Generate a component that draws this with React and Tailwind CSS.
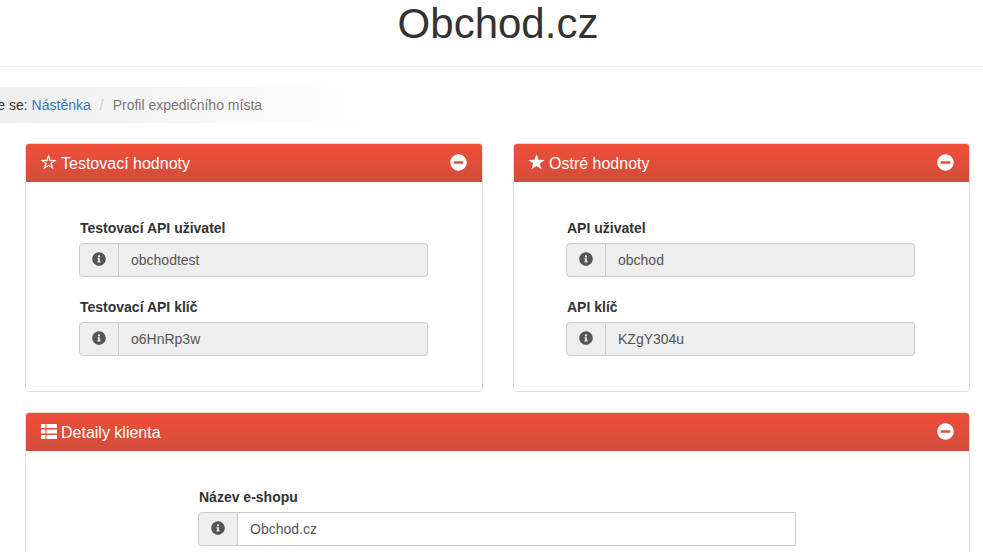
import React from "react";
import { FaInfoCircle, FaMinusCircle } from "react-icons/fa";

const STAR = "M8.5 0.3 L10.55 5.7 L16.6 5.95 L11.85 9.6 L13.5 15.3 L8.5 12 L3.5 15.3 L5.15 9.6 L0.4 5.95 L6.45 5.7 Z";
const STAR_IN = "M8.5 3.6 L9.6 7.2 L13.4 7.3 L10.3 9.4 L11.4 12.9 L8.5 10.8 L5.6 12.9 L6.7 9.4 L3.6 7.3 L7.4 7.2 Z";

function StarIcon({ outline }) {
  return (
    <svg viewBox="0 0 17 16" className="w-[17px] h-[16px] -ml-[1px] -mt-[2px]" fill="currentColor" fillRule="evenodd">
      <path d={outline ? `${STAR} ${STAR_IN}` : STAR} />
    </svg>
  );
}

function ListIcon() {
  return (
    <svg viewBox="0 0 16 15" className="w-[16px] h-[15px] -mt-[1px]" fill="currentColor">
      <rect x="0" y="0" width="4.5" height="4" rx="0.5" />
      <rect x="5.5" y="0" width="10.5" height="4" rx="0.5" />
      <rect x="0" y="5.5" width="4.5" height="4" rx="0.5" />
      <rect x="5.5" y="5.5" width="10.5" height="4" rx="0.5" />
      <rect x="0" y="11" width="4.5" height="4" rx="0.5" />
      <rect x="5.5" y="11" width="10.5" height="4" rx="0.5" />
    </svg>
  );
}

function Field({ label, value, disabled = true, className = "" }) {
  return (
    <div className={className}>
      <div className="text-[14px] leading-[20px] font-bold text-[#333] mb-[5px] pl-[1px]">{label}</div>
      <div className="flex h-[34px] text-[14px] text-[#555]">
        <div className="w-[40px] shrink-0 flex items-center justify-center bg-[#eeeeee] border border-[#cccccc] rounded-l-[4px]">
          <FaInfoCircle className="text-[#555] w-[14px] h-[14px] -mt-[2px]" />
        </div>
        <div className={`flex-1 flex items-center pl-[12px] border border-l-0 border-[#cccccc] ${disabled ? "bg-[#eeeeee] rounded-r-[4px]" : "bg-white"}`}>
          {value}
        </div>
      </div>
    </div>
  );
}

function Panel({ icon, title, children, className = "" }) {
  return (
    <section className={`border border-[#dddddd] rounded-[4px] bg-white ${className}`}>
      <header className="h-[38px] flex items-center justify-between pl-[15px] pr-[15px] rounded-t-[3px] bg-gradient-to-b from-[#f04e39] to-[#d04d3a] text-white text-[16px]">
        <div className="flex items-center gap-[4px]">
          {icon}
          <span className="pt-[1px]">{title}</span>
        </div>
        <FaMinusCircle className="w-[17px] h-[17px] text-white -mt-[2px]" />
      </header>
      {children}
    </section>
  );
}

export default function App() {
  return (
    <div className="w-[983px] h-[552px] overflow-hidden bg-white font-['Liberation_Sans',Arial,sans-serif]">
      <div className="h-[67px] border-b border-[#eeeeee] flex justify-center pl-[13px]">
        <h1 className="text-[42px] leading-[46px] pt-[1px] font-normal text-[#333]">Obchod.cz</h1>
      </div>
      <nav className="mt-[20px] h-[36px] w-[380px] flex items-center bg-gradient-to-r from-[#eeeeee] to-white text-[14px] text-[#333] whitespace-nowrap overflow-hidden">
        <span className="ml-[-58px]">Nacházíte se:</span>
        <a className="ml-[4px] text-[#337ab7]">Nástěnka</a>
        <span className="mx-[9px] text-[#cccccc]">/</span>
        <span className="text-[#777]">Profil expedičního místa</span>
      </nav>
      <main className="mt-[20px] ml-[25px] w-[945px]">
        <div className="flex gap-[30px]">
          <Panel className="w-[458px] h-[249px]" icon={<StarIcon outline />} title="Testovací hodnoty">
            <div className="pl-[53px] pr-[54px] pt-[36px]">
              <Field label="Testovací API uživatel" value="obchodtest" />
              <Field className="mt-[20px]" label="Testovací API klíč" value="o6HnRp3w" />
            </div>
          </Panel>
          <Panel className="w-[457px] h-[249px]" icon={<StarIcon />} title="Ostré hodnoty">
            <div className="pl-[52px] pr-[54px] pt-[36px]">
              <Field label="API uživatel" value="obchod" />
              <Field className="mt-[20px]" label="API klíč" value="KZgY304u" />
            </div>
          </Panel>
        </div>
        <Panel className="mt-[20px] h-[200px]" icon={<ListIcon />} title="Detaily klienta">
          <div className="pl-[172px] pr-[173px] pt-[36px]">
            <Field label="Název e-shopu" value="Obchod.cz" disabled={false} />
          </div>
        </Panel>
      </main>
    </div>
  );
}
